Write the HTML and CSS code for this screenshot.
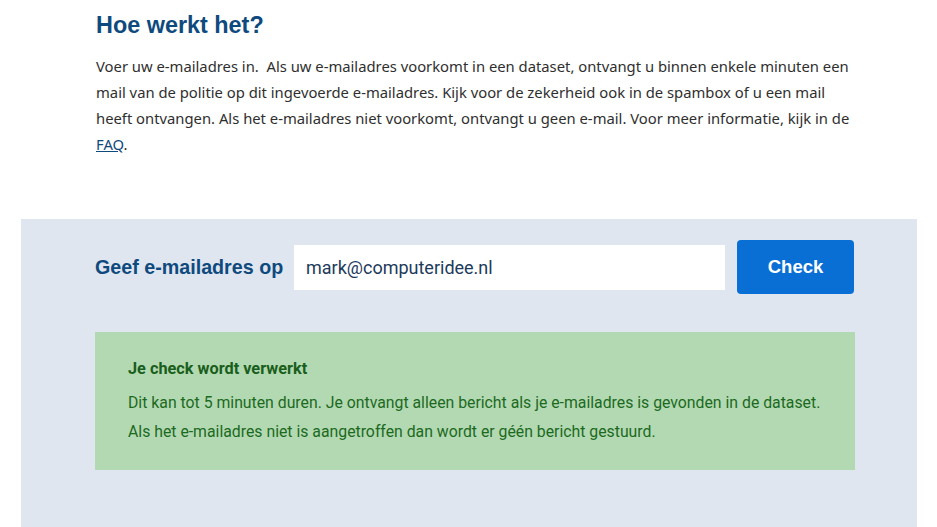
FILE: index.html
```html
<!DOCTYPE html>
<html lang="nl">
<head>
<meta charset="utf-8">
<link rel="stylesheet" href="styles.css">
</head>
<body>
<main class="page">
  <section class="intro">
    <h2 class="intro-title">Hoe werkt het?</h2>
    <p class="intro-text">Voer uw e-mailadres in.&nbsp; Als uw e-mailadres voorkomt in een dataset, ontvangt u binnen enkele minuten een mail van de politie op dit ingevoerde e-mailadres. Kijk voor de zekerheid ook in de spambox of u een mail heeft ontvangen. Als het e-mailadres niet voorkomt, ontvangt u geen e-mail. Voor meer informatie, kijk in de <a class="link" href="#">FAQ</a>.</p>
  </section>
  <section class="panel">
    <form class="check-form">
      <label class="check-label" for="email">Geef e-mailadres op</label>
      <input class="check-input" id="email" type="text" value="mark@computeridee.nl">
      <button class="check-button" type="button">Check</button>
    </form>
    <div class="notice">
      <h3 class="notice-title">Je check wordt verwerkt</h3>
      <p class="notice-text">Dit kan tot 5 minuten duren. Je ontvangt alleen bericht als je e-mailadres is gevonden in de dataset.<br>Als het e-mailadres niet is aangetroffen dan wordt er géén bericht gestuurd.</p>
    </div>
  </section>
</main>
</body>
</html>
```
FILE: styles.css
```css
html, body {
  margin: 0;
  padding: 0;
  background: #ffffff;
}
body {
  font-family: "Noto Sans", "Open Sans", sans-serif;
  color: #333333;
  overflow: hidden;
  height: 527px;
}
.page {
  display: flex;
  flex-direction: column;
}
.intro {
  padding: 9px 0 0 96px;
  width: 856px;
  height: 219px;
  box-sizing: border-box;
}
.intro-title {
  margin: 0 0 12px 0;
  font-family: "Liberation Sans", Arial, sans-serif;
  font-weight: 700;
  font-size: 23.4px;
  line-height: 32px;
  color: #0f4a7e;
}
.intro-text {
  margin: 0;
  font-size: 14.8px;
  line-height: 26px;
  color: #2f2f2f;
}
.link {
  color: #0f4a7e;
  text-decoration: underline;
}
.panel {
  margin-left: 21px;
  width: 896px;
  height: 308px;
  background: #dfe6f0;
  padding: 21px 0 0 74px;
  box-sizing: border-box;
}
.check-form {
  display: flex;
  align-items: center;
  width: 760px;
  margin: 0;
}
.check-label {
  font-family: "Liberation Sans", Arial, sans-serif;
  font-weight: 700;
  font-size: 19.7px;
  color: #0f4a7e;
  width: 199px;
  flex: none;
  white-space: nowrap;
}
.check-input {
  width: 431px;
  height: 45px;
  box-sizing: border-box;
  border: none;
  background: #ffffff;
  padding: 0 12px;
  font-family: "Roboto", "Liberation Sans", sans-serif;
  font-size: 18px;
  color: #1d3a5c;
  outline: none;
  flex: none;
}
.check-button {
  margin-left: 12px;
  width: 117px;
  height: 54px;
  background: #0a6fd4;
  border: none;
  border-radius: 4px;
  color: #ffffff;
  font-family: "Liberation Sans", Arial, sans-serif;
  font-weight: 700;
  font-size: 18.5px;
  flex: none;
}
.notice {
  margin-top: 38px;
  width: 760px;
  height: 138px;
  box-sizing: border-box;
  background: #b3d9b2;
  padding: 26px 33px;
  color: #1c6a1f;
}
.notice-title {
  margin: 0 0 8px 0;
  font-family: "Roboto", sans-serif;
  font-weight: 700;
  font-size: 16.3px;
  line-height: 22px;
  color: #1a5e1c;
}
.notice-text {
  margin: 0;
  font-family: "Roboto", sans-serif;
  font-size: 15.8px;
  line-height: 29px;
}
```
